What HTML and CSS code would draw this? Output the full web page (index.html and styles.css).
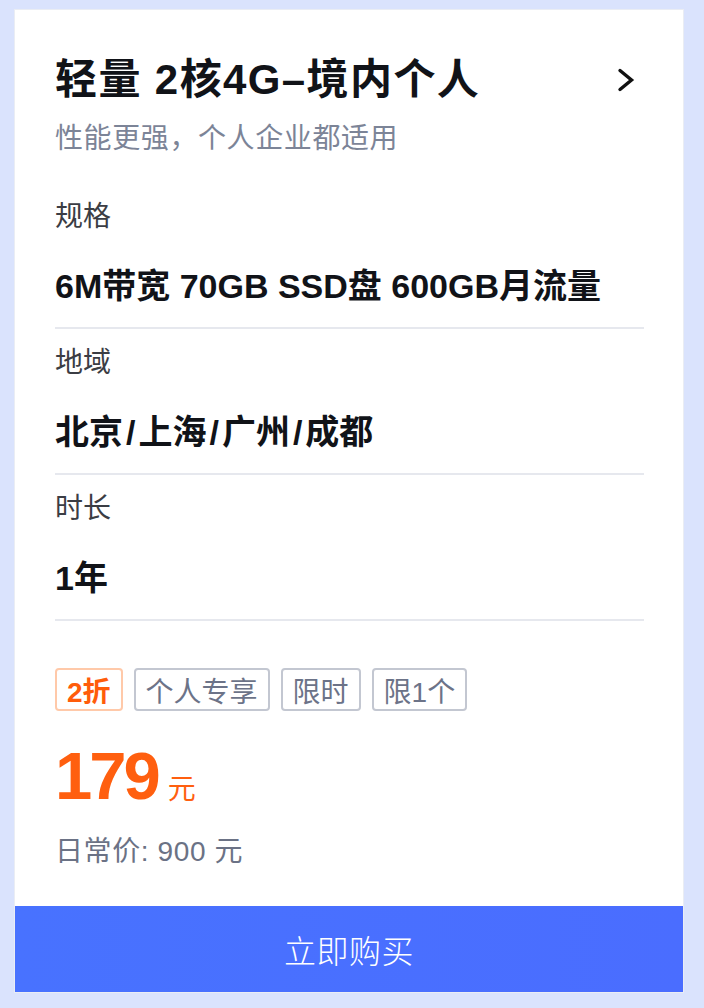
FILE: index.html
```html
<!DOCTYPE html>
<html lang="zh-CN">
<head>
<meta charset="utf-8">
<title>轻量 2核4G-境内个人</title>
<link rel="stylesheet" href="styles.css">
</head>
<body>
<div class="page">
  <div class="card">
    <div class="card-body">
      <div class="header">
        <div class="title-row">
          <h1 class="title">轻量 2核4G–境内个人</h1>
          <svg class="chevron" width="26" height="26" viewBox="0 0 26 26" aria-hidden="true">
            <path d="M10 3.5 L21.5 13 L10 22.5" fill="none" stroke="#111" stroke-width="3.4" stroke-linecap="round" stroke-linejoin="miter"/>
          </svg>
        </div>
        <p class="subtitle">性能更强，个人企业都适用</p>
      </div>

      <div class="spec">
        <div class="spec-label">规格</div>
        <div class="spec-value">6M带宽 70GB SSD盘 600GB月流量</div>
      </div>
      <div class="spec">
        <div class="spec-label">地域</div>
        <div class="spec-value">北京<span class="sep">/</span>上海<span class="sep">/</span>广州<span class="sep">/</span>成都</div>
      </div>
      <div class="spec">
        <div class="spec-label">时长</div>
        <div class="spec-value">1年</div>
      </div>

      <div class="tags">
        <span class="tag tag-hot">2折</span>
        <span class="tag">个人专享</span>
        <span class="tag">限时</span>
        <span class="tag">限1个</span>
      </div>

      <div class="price-row">
        <span class="price">179</span>
        <span class="price-unit">元</span>
      </div>
      <div class="orig-price">日常价: 900 元</div>
    </div>
    <button class="buy" type="button">立即购买</button>
  </div>
</div>
</body>
</html>
```

FILE: styles.css
```css
* {
  box-sizing: border-box;
}

html, body {
  margin: 0;
  padding: 0;
}

body {
  background: #dae3fd;
  font-family: "Liberation Sans", "Noto Sans CJK SC", sans-serif;
  color: #111318;
}

.page {
  padding: 9px 20px 15px 14px;
}

.card {
  width: 670px;
  height: 984px;
  background: #ffffff;
  border: 1px solid #eaedf4;
  display: flex;
  flex-direction: column;
}

.card-body {
  flex: 1;
  padding: 0 39px 0 40px;
}

.header {
  padding-top: 42px;
  padding-bottom: 24px;
}

.title-row {
  display: flex;
  align-items: center;
  justify-content: space-between;
}

.title {
  margin: 0;
  font-size: 42px;
  line-height: 56px;
  font-weight: 700;
  letter-spacing: 1.4px;
  color: #111318;
}

.chevron {
  display: block;
  margin-right: 8px;
}

.subtitle {
  margin: 11px 0 0;
  font-size: 28px;
  line-height: 40px;
  letter-spacing: 0.6px;
  color: #7c8497;
}

.spec {
  padding-top: 14px;
  padding-bottom: 18px;
  border-bottom: 2px solid #e6e8ee;
}

.spec-label {
  font-size: 28px;
  line-height: 40px;
  color: #3b3d44;
}

.spec-value {
  margin-top: 26px;
  font-size: 34px;
  line-height: 46px;
  font-weight: 700;
  color: #111318;
}

.sep {
  margin: 0 3px;
}

.tags {
  display: flex;
  gap: 11px;
  margin-top: 47px;
}

.tag {
  display: inline-flex;
  align-items: center;
  height: 43px;
  padding: 0 10px;
  border: 2px solid #c3c7d1;
  border-radius: 4px;
  font-size: 28px;
  color: #6c7388;
}

.tag-hot {
  border-color: #ffc9a9;
  color: #ff5c0a;
  font-weight: 700;
}

.price-row {
  display: flex;
  align-items: baseline;
  margin-top: 29px;
  color: #ff5f0f;
}

.price {
  font-size: 67px;
  line-height: 72px;
  font-weight: 700;
  letter-spacing: -3px;
}

.price-unit {
  margin-left: 10px;
  font-size: 28px;
}

.orig-price {
  margin-top: 20px;
  font-size: 28px;
  line-height: 40px;
  letter-spacing: 0.6px;
  color: #6b7285;
}

.buy {
  display: block;
  width: 100%;
  height: 86px;
  margin: 0;
  border: 0;
  padding: 0;
  background: linear-gradient(90deg, #4872ff 0%, #4a6dff 100%);
  color: #ffffff;
  font-family: "Noto Sans CJK SC", sans-serif;
  font-size: 32px;
  font-weight: 300;
  letter-spacing: 0.5px;
  cursor: pointer;
}
```
